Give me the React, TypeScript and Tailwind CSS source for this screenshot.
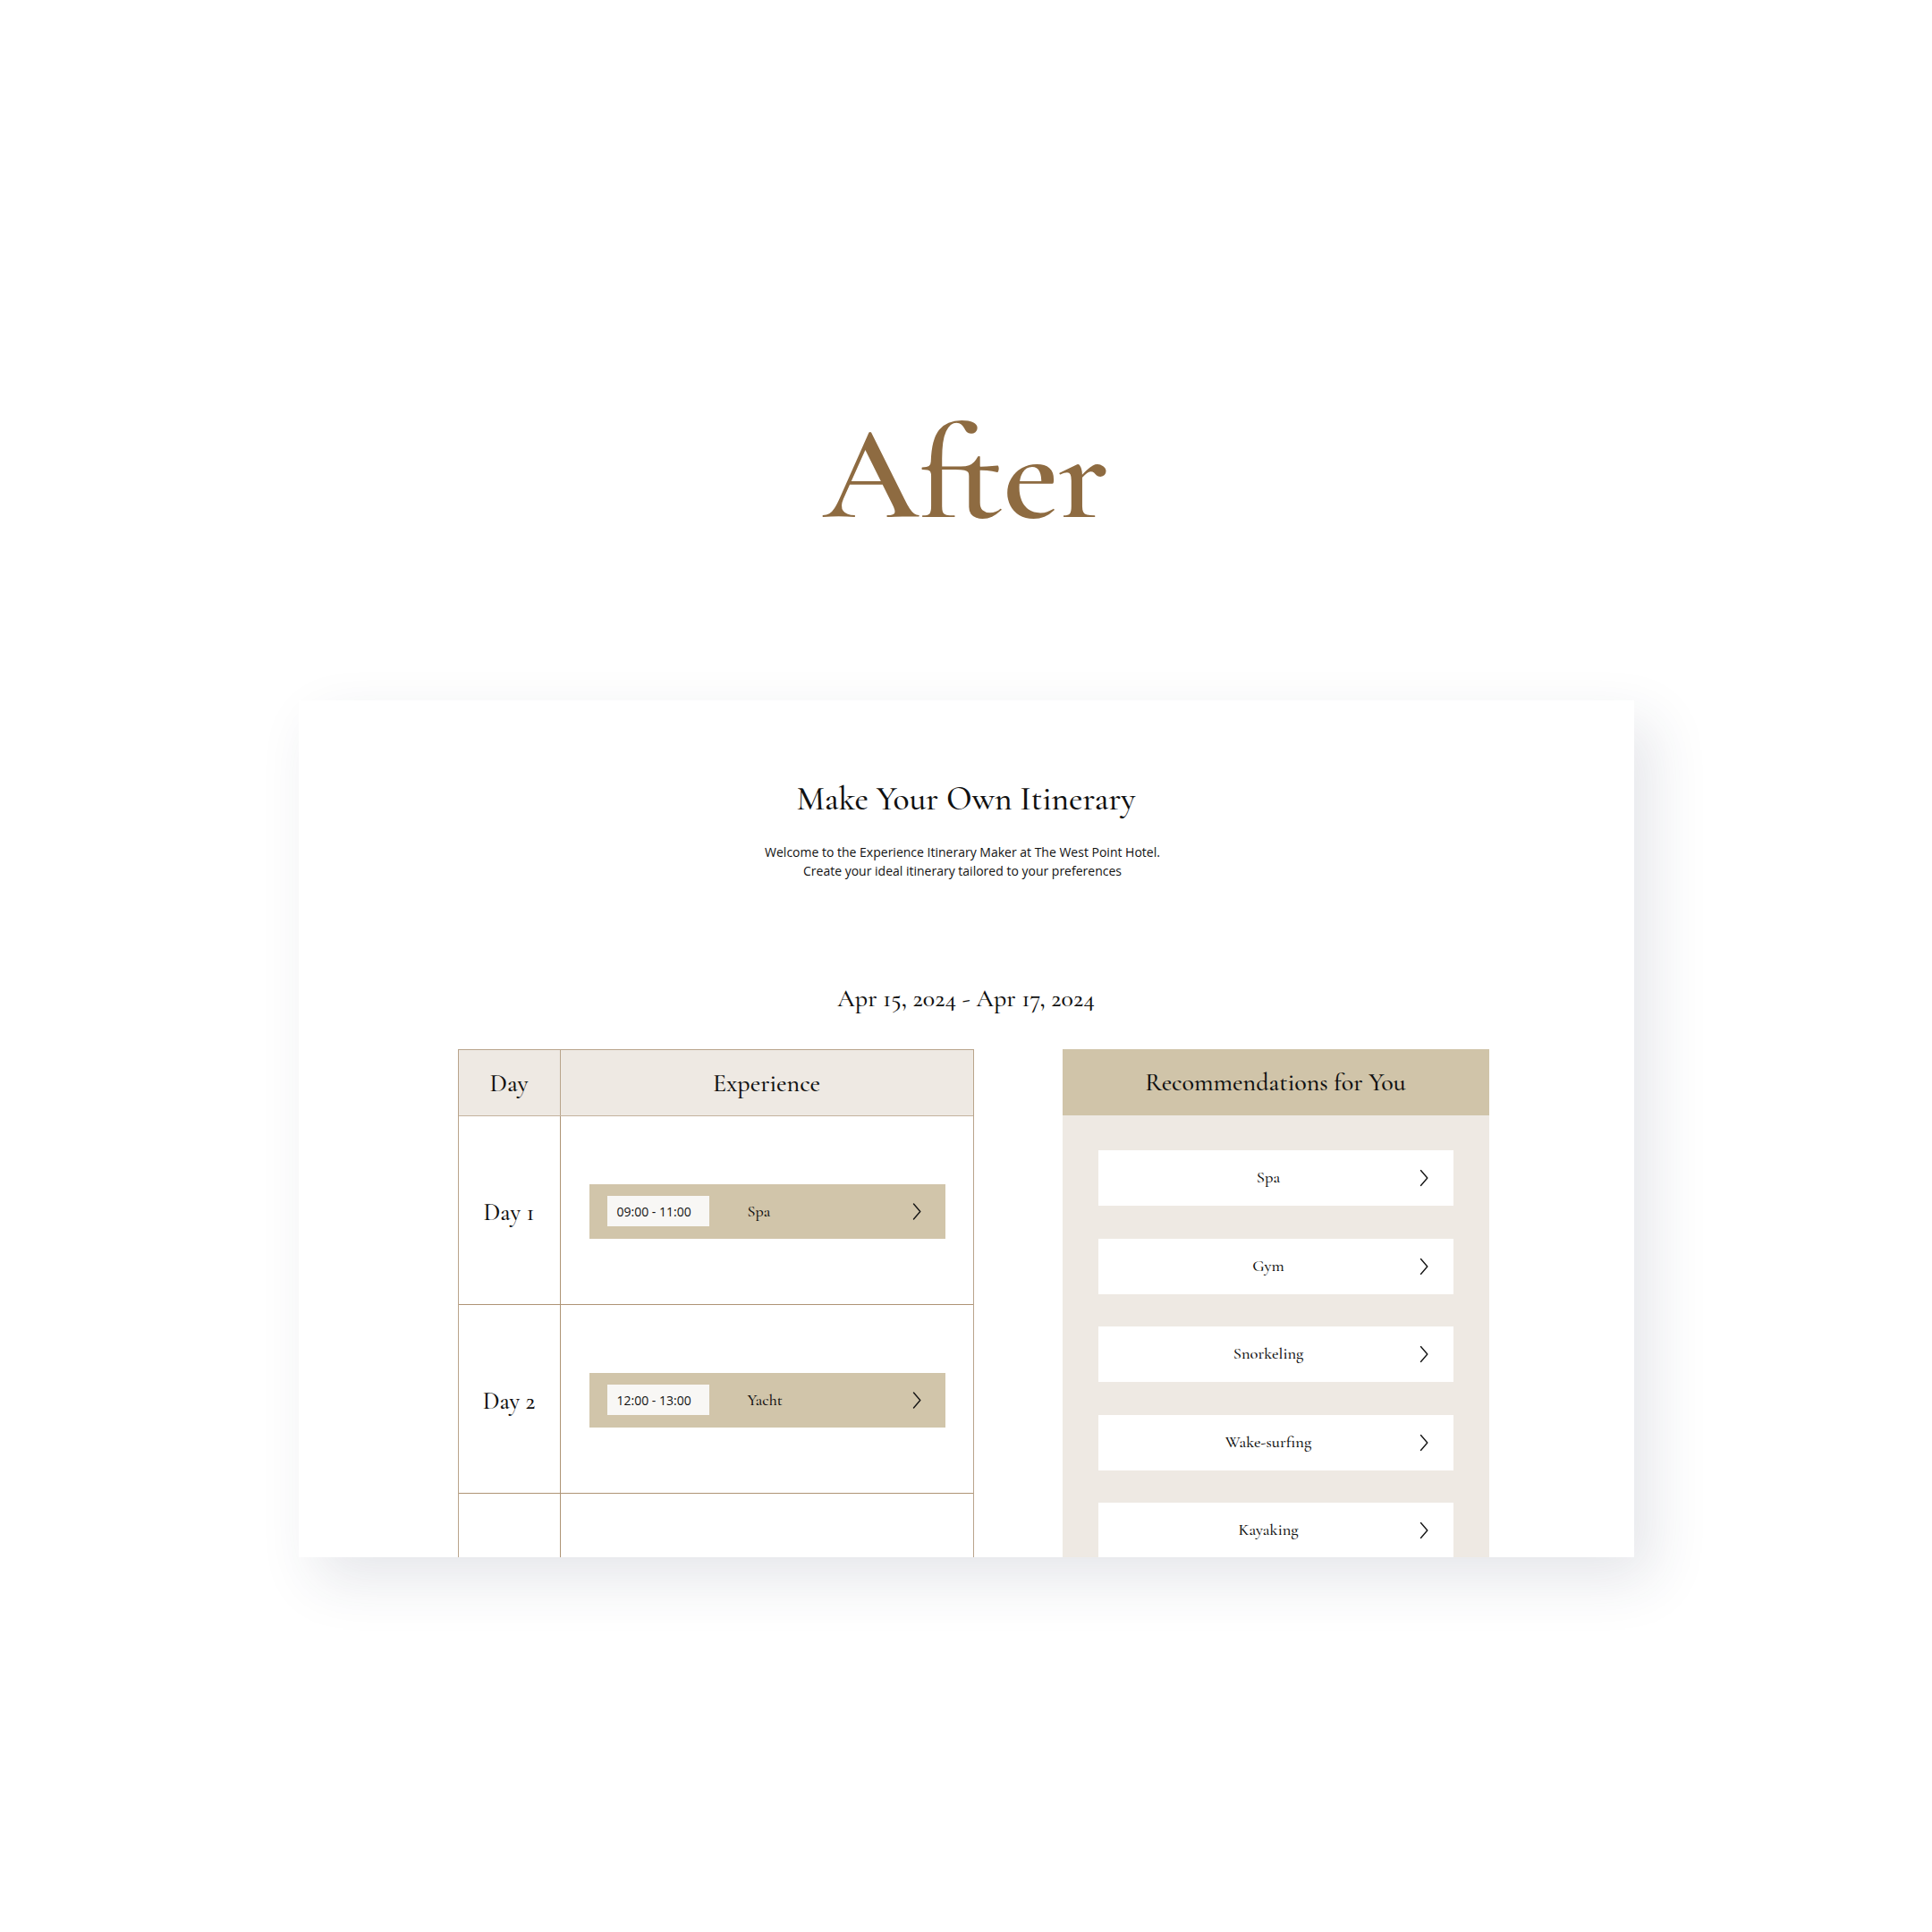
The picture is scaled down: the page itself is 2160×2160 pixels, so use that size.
import React from "react";

const serif = "font-['Cormorant_Garamond','Liberation_Serif',serif]";

function Chevron() {
  return (
    <svg width="10" height="19" viewBox="0 0 10 19" fill="none" className="shrink-0">
      <path d="M1.5 1 L8.8 9.5 L1.5 18" stroke="#151515" strokeWidth="1.4" strokeLinecap="round" strokeLinejoin="round" />
    </svg>
  );
}

function ExperienceBar({ time, name }: { time: string; name: string }) {
  return (
    <div className="ml-[32px] mr-[31px] mt-[2px] flex h-[61px] items-center bg-[#d1c5aa] pl-[20px] pr-[27px]">
      <div className="flex h-[34px] w-[114px] items-center bg-[#f8f7f5] pl-[11px] font-['Open_Sans',sans-serif] text-[14px] text-[#111]">
        {time}
      </div>
      <div className={`ml-[43px] flex-1 ${serif} text-[18px] font-medium text-[#111]`}>{name}</div>
      <Chevron />
    </div>
  );
}

function DayRow({ day, time, name }: { day?: string; time?: string; name?: string }) {
  return (
    <div className="flex h-[211px] border-b border-[#ae9475]">
      <div className={`flex w-[114px] items-center justify-center border-r border-[#ae9475] pt-[6px] ${serif} text-[27px] font-medium text-[#111]`}>
        {day}
      </div>
      <div className="flex flex-1 flex-col justify-center">
        {time && name ? <ExperienceBar time={time} name={name} /> : null}
      </div>
    </div>
  );
}

function RecItem({ label }: { label: string }) {
  return (
    <div className="relative flex h-[62px] shrink-0 items-center bg-white">
      <div className={`flex-1 pr-[16px] text-center ${serif} text-[18.5px] font-medium text-[#111]`}>{label}</div>
      <div className="absolute right-[28px] top-1/2 -translate-y-1/2">
        <Chevron />
      </div>
    </div>
  );
}

export default function App() {
  return (
    <div className="min-h-[2160px] w-full bg-white">
      <div className="flex flex-col items-center pt-[455px]">
        <h1 className={`${serif} text-[150px] font-semibold leading-[150px] text-[#8e6b41]`}>After</h1>
      </div>
      <div className="mx-auto mt-[178px] h-[958px] w-[1493px] overflow-hidden bg-white shadow-[20px_25px_60px_rgba(40,50,80,0.12)]">
        <div className="flex flex-col items-center pt-[92px]">
          <h2 className={`${serif} text-[37.5px] font-medium leading-[37px] text-[#111]`}>Make Your Own Itinerary</h2>
          <p className="mt-[30px] pr-[8px] text-center font-['Open_Sans',sans-serif] text-[14px] leading-[21px] text-[#111]">
            Welcome to the Experience Itinerary Maker at The West Point Hotel.
            <br />
            Create your ideal itinerary tailored to your preferences
          </p>
          <div className={`mt-[118px] ${serif} text-[28px] font-medium leading-[28px] text-[#111]`}>Apr 15, 2024 - Apr 17, 2024</div>
        </div>
        <div className="mt-[43px] flex items-start gap-[99px] pl-[178px]">
          <div className="w-[577px] border-x border-t border-[#b9a48b]">
            <div className="flex h-[74px] border-b border-[#c3b29e] bg-[#eee9e3]">
              <div className={`flex w-[114px] items-center justify-center border-r border-[#b9a48b] ${serif} text-[28px] font-medium text-[#111]`}>
                Day
              </div>
              <div className={`flex flex-1 items-center justify-center ${serif} text-[28px] font-medium text-[#111]`}>Experience</div>
            </div>
            <DayRow day="Day 1" time="09:00 - 11:00" name="Spa" />
            <DayRow day="Day 2" time="12:00 - 13:00" name="Yacht" />
            <DayRow />
          </div>
          <div className="w-[477px]">
            <div className={`flex h-[74px] items-center justify-center bg-[#d0c4a9] ${serif} text-[28px] font-medium text-[#111]`}>
              Recommendations for You
            </div>
            <div className="flex h-[560px] flex-col gap-[36.5px] bg-[#eee9e3] px-[40px] pt-[39px]">
              <RecItem label="Spa" />
              <RecItem label="Gym" />
              <RecItem label="Snorkeling" />
              <RecItem label="Wake-surfing" />
              <RecItem label="Kayaking" />
            </div>
          </div>
        </div>
      </div>
    </div>
  );
}
